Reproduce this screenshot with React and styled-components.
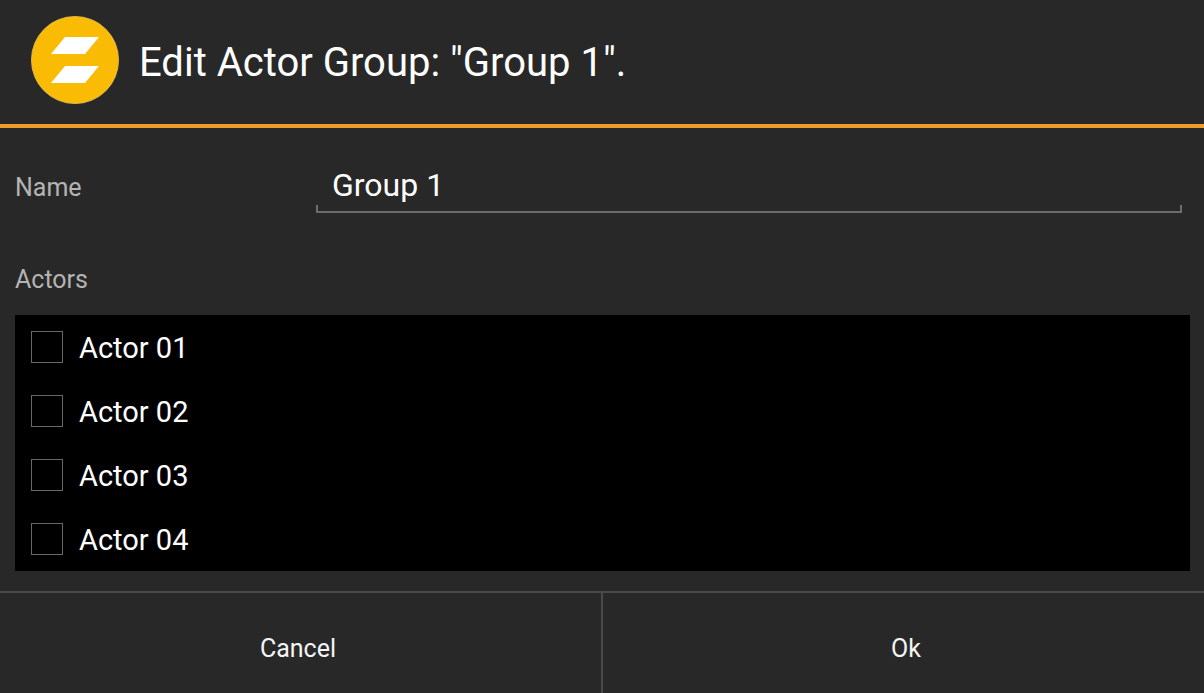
import { useState } from "react";
import styled, { createGlobalStyle } from "styled-components";

const GlobalStyle = createGlobalStyle`
    * {
        box-sizing: border-box;
    }
    body {
        margin: 0;
        background-color: #282828;
        color: white;
        font-family: Roboto, sans-serif;
    }
`

const Dialog = styled.form`
    display: flex;
    flex-direction: column;
    min-height: 100vh;
`

const Header = styled.header`
    display: flex;
    align-items: center;
    gap: 20px;
    padding: 16px 31px 20px;
    border-bottom: 4px solid #EE9D2C;
`

const Logo = styled.svg`
    flex: none;
    width: 88px;
    height: 88px;
`

const Title = styled.h1`
    margin: 0;
    padding-top: 6px;
    font-size: 40px;
    line-height: 48px;
    font-weight: 400;
`

const Content = styled.main`
    flex: 1;
    padding: 38px 14px 20px 15px;
`

const Field = styled.div`
    display: grid;
    grid-template-columns: 301px 1fr;
    align-items: baseline;
    padding-right: 8px;
    margin-bottom: 52px;
`

const Label = styled.label`
    font-size: 25px;
    line-height: 30px;
    color: #B4B4B4;
`

const Legend = styled(Label).attrs({ as: "h2" })`
    margin: 0 0 20px;
    font-weight: 400;
`

/* bottom line with a short tick at both ends */
const TextInput = styled.input`
    width: 100%;
    height: 47px;
    padding: 0 16px 9px;
    border: none;
    outline: none;
    background:
        linear-gradient(#6C6C6C, #6C6C6C) left bottom / 100% 2px no-repeat,
        linear-gradient(#6C6C6C, #6C6C6C) left bottom / 2px 8px no-repeat,
        linear-gradient(#6C6C6C, #6C6C6C) right bottom / 2px 8px no-repeat;
    color: white;
    font-family: inherit;
    font-size: 32px;
    line-height: 38px;
`

const ActorList = styled.ul`
    margin: 0;
    padding: 0;
    list-style: none;
    background-color: black;
`

const ActorRow = styled.label`
    display: flex;
    align-items: center;
    gap: 16px;
    height: 64px;
    padding: 0 16px;
    cursor: pointer;
`

const ActorName = styled.span`
    padding-top: 2px;
    font-size: 29px;
    line-height: 34px;
`

const Checkbox = styled.input`
    appearance: none;
    flex: none;
    width: 32px;
    height: 32px;
    margin: 0;
    border: 1px solid #686868;
    cursor: pointer;

    &:checked {
        background-color: #FABB05;
        box-shadow: inset 0 0 0 6px black;
    }
`

const Footer = styled.footer`
    display: flex;
    border-top: 2px solid #4A4A4A;
`

const FooterButton = styled.button`
    flex: 1;
    height: 100px;
    padding: 10px 5px 0 0;
    border: none;
    background: none;
    color: #F4F4F4;
    font-family: inherit;
    font-size: 25px;
    cursor: pointer;

    & + & {
        padding: 10px 0 0 5px;
        border-left: 2px solid #4A4A4A;
    }
`

const actors = ["Actor 01", "Actor 02", "Actor 03", "Actor 04"];

function App() {
    const [name, setName] = useState("Group 1");
    const [selected, setSelected] = useState([]);

    const toggle = (actor) => {
        setSelected(selected.includes(actor)
            ? selected.filter((item) => item !== actor)
            : [...selected, actor]);
    };

    return (
        <>
            <GlobalStyle />
            <Dialog onSubmit={(e) => e.preventDefault()}>
                <Header>
                    <Logo viewBox="0 0 88 88" aria-hidden="true">
                        <circle cx="44" cy="44" r="43.6" fill="#FABB05" stroke="#E3C05A" strokeWidth="0.8" />
                        <path d="M34 21H68L54 38H20Z M34 50H68L54 67H20Z" fill="white" />
                    </Logo>
                    <Title>Edit Actor Group: "Group 1".</Title>
                </Header>
                <Content>
                    <Field>
                        <Label htmlFor="name">Name</Label>
                        <TextInput id="name" type="text" value={name} onChange={(e) => setName(e.target.value)} />
                    </Field>
                    <Legend>Actors</Legend>
                    <ActorList>
                        {actors.map((actor) => (
                            <li key={actor}>
                                <ActorRow>
                                    <Checkbox
                                        type="checkbox"
                                        checked={selected.includes(actor)}
                                        onChange={() => toggle(actor)}
                                    />
                                    <ActorName>{actor}</ActorName>
                                </ActorRow>
                            </li>
                        ))}
                    </ActorList>
                </Content>
                <Footer>
                    <FooterButton type="button">Cancel</FooterButton>
                    <FooterButton type="submit">Ok</FooterButton>
                </Footer>
            </Dialog>
        </>
    );
}

export default App
